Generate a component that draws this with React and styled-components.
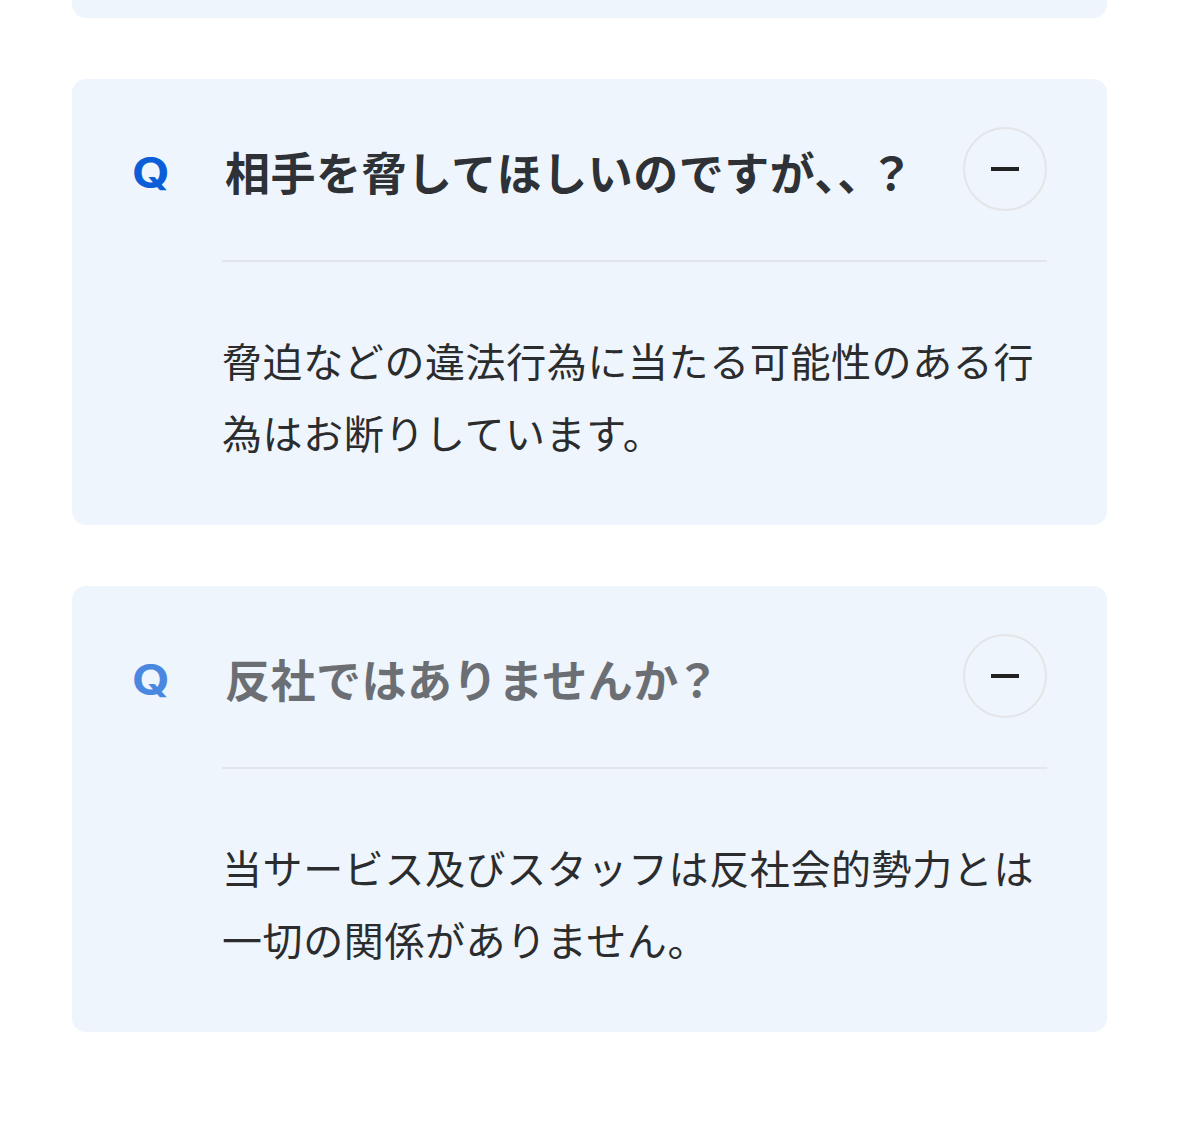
import styled, { createGlobalStyle } from "styled-components";

const GlobalStyle = createGlobalStyle`
  body {
    margin: 0;
    background: #ffffff;
    font-family: "Noto Sans CJK JP", "Noto Sans", sans-serif;
  }
`;

const faqs = [
  {
    q: "相手を脅してほしいのですが、、",
    mark: "？",
    a: "脅迫などの違法行為に当たる可能性のある行為はお断りしています。",
  },
  {
    q: "反社ではありませんか",
    mark: "？",
    a: "当サービス及びスタッフは反社会的勢力とは一切の関係がありません。",
    dim: true,
  },
];

const Page = styled.div`
  display: flex;
  flex-direction: column;
  gap: 61px;
  padding: 0 72px 90px;
`;

const Stub = styled.div`
  height: 18px;
  background: #eef5fc;
  border-radius: 0 0 14px 14px;
`;

const Card = styled.div`
  background: #eef5fc;
  border-radius: 14px;
  padding: 48px 60px 57px;
`;

const Header = styled.div`
  display: flex;
  align-items: center;
  height: 84px;
`;

const QCol = styled.div`
  width: 90px;
  flex-shrink: 0;
  padding-top: 8px;
`;

const QMark = styled.span`
  display: inline-block;
  font-family: "Inter", "Liberation Sans", sans-serif;
  font-weight: 700;
  font-size: 42px;
  line-height: 1;
  color: #0b5ed7;
  transform: scaleX(1.15);
  transform-origin: left center;
  opacity: ${(p) => (p.$dim ? 0.72 : 1)};
`;

const Title = styled.h3`
  flex: 1;
  margin: 0 0 0 3px;
  font-size: 45px;
  font-weight: 700;
  line-height: 1.2;
  letter-spacing: 0.5px;
  color: #2e3135;
  padding-top: 6px;
  opacity: ${(p) => (p.$dim ? 0.68 : 1)};
`;

const Mark = styled.span`
  margin-left: ${(p) => (p.$tight ? "-14px" : "-4px")};
`;

const Toggle = styled.button`
  width: 84px;
  height: 84px;
  flex-shrink: 0;
  border-radius: 50%;
  border: 2px solid #e4e5e7;
  background: transparent;
  display: flex;
  align-items: center;
  justify-content: center;
  padding: 0;
  cursor: pointer;

  span {
    display: block;
    width: 28px;
    height: 4px;
    background: #222;
  }
`;

const Divider = styled.hr`
  margin: 49px 0 0 90px;
  border: 0;
  height: 2px;
  background: #e2e5e9;
`;

const Answer = styled.p`
  margin: 62px 0 0 90px;
  font-size: 40px;
  line-height: 72px;
  letter-spacing: 0.6px;
  font-weight: 400;
  color: #2b2c2e;
`;

function FaqItem({ q, mark, a, dim }) {
  return (
    <Card>
      <Header>
        <QCol>
          <QMark $dim={dim}>Q</QMark>
        </QCol>
        <Title $dim={dim}>
          {q}
          <Mark $tight={q.endsWith("、")}>{mark}</Mark>
        </Title>
        <Toggle aria-label="閉じる">
          <span />
        </Toggle>
      </Header>
      <Divider />
      <Answer>{a}</Answer>
    </Card>
  );
}

export default function App() {
  return (
    <>
      <GlobalStyle />
      <Page>
        <Stub />
        {faqs.map((f) => (
          <FaqItem key={f.q} {...f} />
        ))}
      </Page>
    </>
  );
}
